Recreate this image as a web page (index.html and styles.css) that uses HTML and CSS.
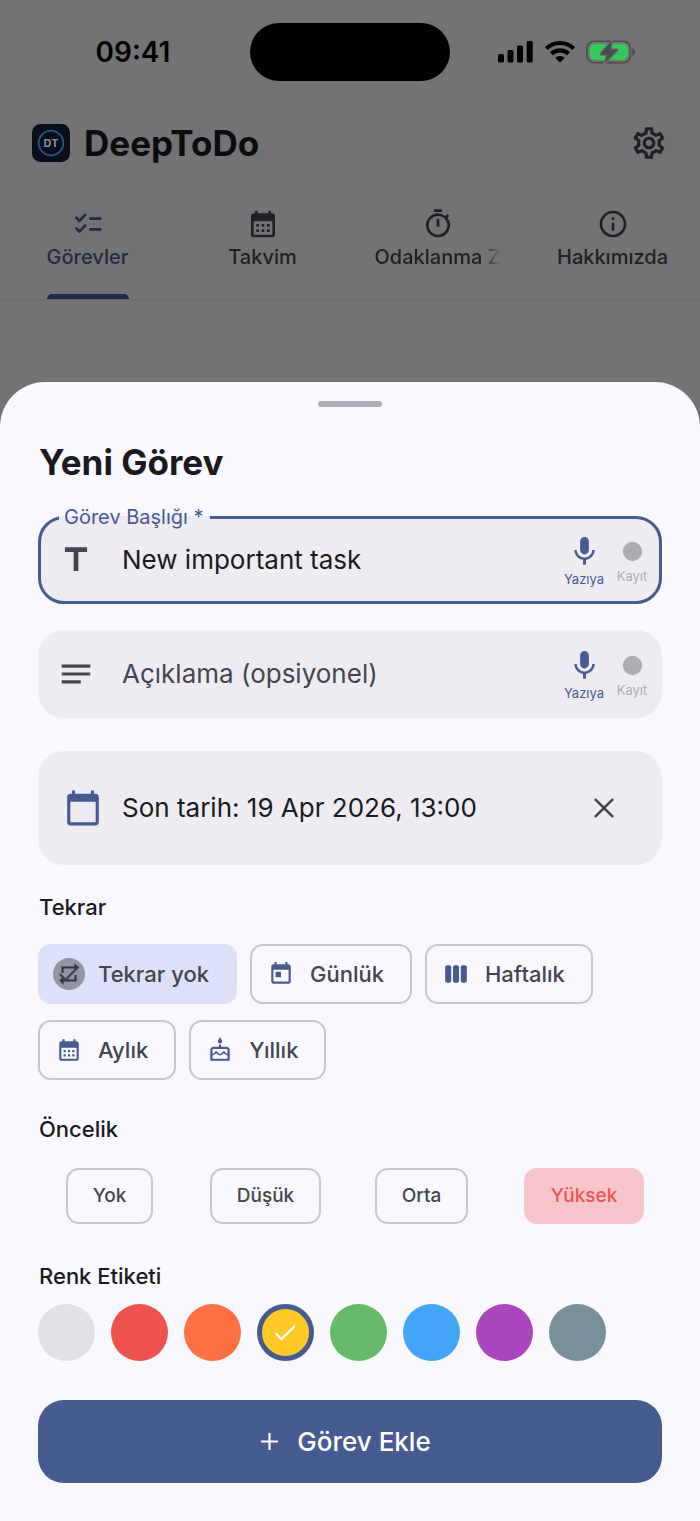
FILE: index.html
```html
<!DOCTYPE html>
<html lang="tr">
<head>
<meta charset="utf-8">
<meta name="viewport" content="width=device-width, initial-scale=1">
<title>DeepToDo</title>
<link rel="stylesheet" href="styles.css">
</head>
<body>
<svg class="sprite" aria-hidden="true">
  <symbol id="mic" viewBox="0 0 24 24"><path d="M12 14c1.66 0 2.99-1.34 2.99-3L15 5c0-1.66-1.34-3-3-3S9 3.340 9 5v6c0 1.660 1.340 3 3 3zm5.300-3c0 3-2.540 5.100-5.300 5.100S6.700 14 6.700 11H5c0 3.410 2.720 6.230 6 6.720V21h2v-3.280c3.280-.48 6-3.300 6-6.720h-1.700z"/></symbol>
  <symbol id="record" viewBox="0 0 24 24"><circle cx="12" cy="12" r="8"/></symbol>
  <symbol id="month" viewBox="0 0 24 24"><path d="M19 4h-1V2h-2v2H8V2H6v2H5c-1.11 0-1.99.9-1.99 2L3 20c0 1.100.89 2 2 2h14c1.100 0 2-.9 2-2V6c0-1.100-.9-2-2-2zm0 16H5V10h14v10zM9 14H7v-2h2v2zm4 0h-2v-2h2v2zm4 0h-2v-2h2v2zm-8 4H7v-2h2v2zm4 0h-2v-2h2v2zm4 0h-2v-2h2v2z"/></symbol>
</svg>

<div class="app">
  <div class="status">
    <time class="status-time">09:41</time>
    <span class="island"></span>
    <div class="status-icons">
      <svg width="36" height="24" viewBox="0 0 36 24"><g fill="#000"><rect x="0" y="14" width="6" height="8.500" rx="1.600"/><rect x="9.500" y="10" width="6" height="12.500" rx="1.600"/><rect x="19" y="5.500" width="6" height="17" rx="1.600"/><rect x="28.700" y="1" width="6" height="21.500" rx="1.600"/></g></svg>
      <svg width="32" height="24" viewBox="0 0 32 24"><g fill="none" stroke="#000" stroke-width="4.200"><path d="M2.300 8.600a19.500 19.500 0 0 1 27.400 0"/><path d="M7.400 13.800a12.300 12.300 0 0 1 17.200 0"/></g><path d="M16 22.600l-4.800-4.700a6.800 6.800 0 0 1 9.600 0z"/></svg>
      <svg width="50" height="24" viewBox="0 0 50 24"><rect x="1" y="1.200" width="43.500" height="21.400" rx="7.200" fill="none" stroke="#4c4c4e" stroke-width="1.600"/><path d="M46.400 8v8c1.600-.6 2.600-2.200 2.600-4s-1-3.400-2.600-4z" fill="#4c4c4e"/><rect x="3.600" y="3.800" width="38.400" height="16.200" rx="5" fill="#34c759"/><path d="M26 .4L14.800 13.200c-.6.800-.2 1.500.6 1.500h5.400L18.400 23.600 31 10.700c.7-.8.300-1.500-.6-1.500h-5.600z" fill="#4c4c4e" stroke="#737375" stroke-width="2" paint-order="stroke"/></svg>
    </div>
  </div>

  <header class="bar">
    <svg class="logo" viewBox="0 0 38 38"><rect width="38" height="38" rx="8.500" fill="#0a0d1c"/><circle cx="19" cy="19" r="12.300" fill="none" stroke="#1e5a88" stroke-width="1.800"/><text x="19" y="22.600" text-anchor="middle">DT</text></svg>
    <h1>DeepToDo</h1>
    <button class="plain" type="button" aria-label="Ayarlar"><svg class="i38" viewBox="0 0 24 24"><path d="M19.430 12.980c.04-.32.07-.64.07-.98 0-.34-.03-.66-.07-.98l2.110-1.650c.19-.15.24-.42.12-.64l-2-3.460c-.09-.16-.26-.25-.44-.25-.06 0-.12.01-.17.03l-2.490 1c-.52-.4-1.080-.73-1.690-.98l-.38-2.650C14.460 2.180 14.250 2 14 2h-4c-.25 0-.46.18-.49.42l-.38 2.650c-.61.25-1.170.59-1.690.98l-2.490-1c-.06-.02-.12-.03-.18-.03-.17 0-.34.09-.43.25l-2 3.460c-.13.22-.07.49.12.64l2.110 1.650c-.04.32-.07.65-.07.98 0 .33.03.66.07.98l-2.110 1.650c-.19.15-.24.42-.12.64l2 3.460c.09.16.26.25.44.25.06 0 .12-.01.17-.03l2.490-1c.52.4 1.080.73 1.690.98l.38 2.650c.03.24.24.42.49.42h4c.25 0 .46-.18.49-.42l.38-2.650c.61-.25 1.170-.59 1.690-.98l2.490 1c.06.02.12.03.18.03.17 0 .34-.09.43-.25l2-3.460c.12-.22.07-.49-.12-.64l-2.110-1.650zm-1.980-1.710c.04.31.05.52.05.73 0 .21-.02.43-.05.73l-.14 1.130.89.7 1.080.84-.7 1.210-1.270-.51-1.040-.42-.9.68c-.43.32-.84.56-1.250.73l-1.060.43-.16 1.130-.2 1.350h-1.400l-.19-1.350-.16-1.130-1.060-.43c-.43-.18-.83-.41-1.230-.71l-.91-.7-1.060.43-1.270.51-.7-1.210 1.080-.84.89-.7-.14-1.130c-.03-.31-.05-.54-.05-.74s.02-.43.05-.73l.14-1.130-.89-.7-1.080-.84.7-1.210 1.270.51 1.040.42.9-.68c.43-.32.84-.56 1.250-.73l1.060-.43.16-1.130.2-1.350h1.390l.19 1.350.16 1.130 1.060.43c.43.18.83.41 1.230.71l.91.7 1.060-.43 1.270-.51.7 1.210-1.070.85-.89.7.14 1.130zM12 8c-2.210 0-4 1.790-4 4s1.790 4 4 4 4-1.790 4-4-1.790-4-4-4zm0 6c-1.100 0-2-.9-2-2s.9-2 2-2 2 .9 2 2-.9 2-2 2z"/></svg></button>
  </header>

  <nav class="tabs">
    <a class="tab active" href="#gorevler" aria-current="page"><svg class="i32" viewBox="0 0 24 24"><path d="M22 7h-9v2h9V7zm0 8h-9v2h9v-2zM5.540 11 2 7.460l1.410-1.410 2.120 2.120 4.240-4.240 1.410 1.410L5.540 11zm0 8L2 15.460l1.410-1.410 2.120 2.120 4.240-4.240 1.410 1.410L5.540 19z"/></svg><span>Görevler</span></a>
    <a class="tab" href="#takvim"><svg class="i32"><use href="#month"/></svg><span>Takvim</span></a>
    <a class="tab" href="#odaklanma"><svg class="i32" viewBox="0 0 24 24"><path d="M15 1H9v2h6V1zm-4 13h2V8h-2v6zm8.030-6.610 1.420-1.420c-.43-.51-.9-.99-1.410-1.410l-1.420 1.420A8.962 8.962 0 0 0 12 4c-4.970 0-9 4.030-9 9s4.020 9 9 9a8.994 8.994 0 0 0 7.030-14.610zM12 20c-3.870 0-7-3.130-7-7s3.130-7 7-7 7 3.130 7 7-3.130 7-7 7z"/></svg><span class="fade">Odaklanma Z</span></a>
    <a class="tab" href="#hakkimizda"><svg class="i32" viewBox="0 0 24 24"><path d="M11 7h2v2h-2zm0 4h2v6h-2zm1-9C6.480 2 2 6.480 2 12s4.480 10 10 10 10-4.480 10-10S17.520 2 12 2zm0 18c-4.410 0-8-3.590-8-8s3.590-8 8-8 8 3.590 8 8-3.590 8-8 8z"/></svg><span>Hakkımızda</span></a>
  </nav>
</div>

<main class="sheet">
  <div class="handle"></div>
  <form>
    <h2>Yeni Görev</h2>

    <fieldset class="field focused">
      <legend><label for="task-title">Görev Başlığı *</label></legend>
      <div class="field-row">
        <svg class="i38" viewBox="0 0 24 24"><path d="M5 4v3h5.500v12h3V7H19V4z"/></svg>
        <input id="task-title" type="text" value="New important task">
        <button class="voice" type="button"><svg class="i35"><use href="#mic"/></svg>Yazıya</button>
        <button class="voice off" type="button"><svg class="i29"><use href="#record"/></svg>Kayıt</button>
      </div>
    </fieldset>

    <div class="field">
      <div class="field-row">
        <svg class="i38" viewBox="0 0 24 24"><path d="M3 18h12v-2H3v2zM3 6v2h18V6H3zm0 7h18v-2H3v2z"/></svg>
        <input type="text" placeholder="Açıklama (opsiyonel)" aria-label="Açıklama">
        <button class="voice" type="button"><svg class="i35"><use href="#mic"/></svg>Yazıya</button>
        <button class="voice off" type="button"><svg class="i29"><use href="#record"/></svg>Kayıt</button>
      </div>
    </div>

    <div class="date">
      <svg class="i38" viewBox="0 0 24 24"><path d="M20 3h-1V1h-2v2H7V1H5v2H4c-1.100 0-2 .9-2 2v16c0 1.100.9 2 2 2h16c1.100 0 2-.9 2-2V5c0-1.100-.9-2-2-2zm0 18H4V8h16v13z"/></svg>
      <span>Son tarih: 19 Apr 2026, 13:00</span>
      <button class="plain" type="button" aria-label="Tarihi temizle"><svg class="i32" viewBox="0 0 24 24"><path d="M5.700 5.700l12.600 12.600M18.300 5.700L5.700 18.300" fill="none" stroke="currentColor" stroke-width="1.900" stroke-linecap="round"/></svg></button>
    </div>

    <h3>Tekrar</h3>
    <div class="chips" role="radiogroup" aria-label="Tekrar">
      <label class="chip selected"><input type="radio" name="repeat" checked><span class="avatar"><svg class="i26" viewBox="0 0 24 24"><path fill="#2f3445" d="M7 7h10v3l4-4-4-4v3H5v6h2V7zm10 10H7v-3l-4 4 4 4v-3h12v-6h-2v4z"/><path d="M3.600 12.200l5.200 5.100L20.800 5.200" fill="none" stroke="#3c4357" stroke-width="2.200"/></svg></span>Tekrar yok</label>
      <label class="chip"><input type="radio" name="repeat"><svg class="i26" viewBox="0 0 24 24"><path d="M19 3h-1V1h-2v2H8V1H6v2H5c-1.110 0-1.990.9-1.990 2L3 19c0 1.100.89 2 2 2h14c1.100 0 2-.9 2-2V5c0-1.100-.9-2-2-2zm0 16H5V8h14v11zM7 10h5v5H7z"/></svg>Günlük</label>
      <label class="chip"><input type="radio" name="repeat"><svg class="i26" viewBox="0 0 24 24"><rect x="2" y="4" width="5.600" height="16" rx="1.800"/><rect x="9.200" y="4" width="5.600" height="16" rx="1.800"/><rect x="16.400" y="4" width="5.600" height="16" rx="1.800"/></svg>Haftalık</label>
      <label class="chip"><input type="radio" name="repeat"><svg class="i26"><use href="#month"/></svg>Aylık</label>
      <label class="chip"><input type="radio" name="repeat"><svg class="i26" viewBox="0 0 24 24"><path d="M12 6c1.110 0 2-.9 2-2 0-.38-.1-.73-.29-1.030L12 0l-1.710 2.970c-.19.3-.29.65-.29 1.030 0 1.100.9 2 2 2zm6 3h-5V7h-2v2H6c-1.660 0-3 1.340-3 3v9c0 .55.45 1 1 1h16c.55 0 1-.45 1-1v-9c0-1.660-1.340-3-3-3zm1 11H5v-3c.9-.01 1.760-.37 2.400-1.010l1.090-1.070 1.070 1.070c1.310 1.310 3.590 1.300 4.890 0l1.080-1.070 1.070 1.070c.64.64 1.500 1 2.400 1.010v3zm0-4.500c-.51-.01-.99-.2-1.350-.57l-2.130-2.130-2.140 2.130c-.74.74-2.030.74-2.770 0L8.480 12.800l-2.140 2.130c-.35.36-.83.56-1.340.57V12c0-.55.45-1 1-1h12c.55 0 1 .45 1 1v3.500z"/></svg>Yıllık</label>
    </div>

    <h3>Öncelik</h3>
    <div class="levels" role="radiogroup" aria-label="Öncelik">
      <label class="level"><input type="radio" name="priority"><span>Yok</span></label>
      <label class="level"><input type="radio" name="priority"><span>Düşük</span></label>
      <label class="level"><input type="radio" name="priority"><span>Orta</span></label>
      <label class="level high"><input type="radio" name="priority" checked><span>Yüksek</span></label>
    </div>

    <h3>Renk Etiketi</h3>
    <div class="colors" role="radiogroup" aria-label="Renk Etiketi">
      <label class="color none"><input type="radio" name="color" aria-label="Yok"></label>
      <label class="color red"><input type="radio" name="color" aria-label="Kırmızı"></label>
      <label class="color orange"><input type="radio" name="color" aria-label="Turuncu"></label>
      <label class="color yellow"><input type="radio" name="color" aria-label="Sarı" checked><svg class="i29" viewBox="0 0 24 24"><path d="M4 12.900l4.600 4.600L19.800 6.600" fill="none" stroke="#fff" stroke-width="1.800"/></svg></label>
      <label class="color green"><input type="radio" name="color" aria-label="Yeşil"></label>
      <label class="color blue"><input type="radio" name="color" aria-label="Mavi"></label>
      <label class="color purple"><input type="radio" name="color" aria-label="Mor"></label>
      <label class="color slate"><input type="radio" name="color" aria-label="Gri"></label>
    </div>

    <button class="submit" type="submit"><svg class="i29" viewBox="0 0 24 24"><path d="M12 5v14M5 12h14" fill="none" stroke="#fff" stroke-width="1.800"/></svg>Görev Ekle</button>
  </form>
</main>
</body>
</html>
```

FILE: styles.css
```css
* {
  box-sizing: border-box;
}

body {
  margin: 0;
  min-height: 100vh;
  display: flex;
  flex-direction: column;
  background: #737375;
  color: #1a1b21;
  font-family: Inter, Roboto, sans-serif;
}

svg {
  display: block;
  flex: none;
  fill: currentColor;
}

.sprite {
  position: absolute;
  width: 0;
  height: 0;
}

.i26 { width: 26px; height: 26px; }
.i29 { width: 29px; height: 29px; }
.i32 { width: 32px; height: 32px; }
.i35 { width: 35px; height: 35px; }
.i38 { width: 38px; height: 38px; }

button {
  font-family: inherit;
  border: 0;
  cursor: pointer;
}

.plain {
  padding: 0;
  background: none;
  color: inherit;
}

/* Dimmed application behind the sheet */
.app {
  padding-bottom: 82px;
}

.status {
  display: grid;
  grid-template-columns: 1fr 200px 1fr;
  align-items: center;
  padding-top: 23px;
}

.status-time {
  padding-left: 16px;
  text-align: center;
  font-size: 28px;
  font-weight: 600;
  line-height: 34px;
  color: #000;
}

.island {
  height: 58px;
  border-radius: 29px;
  background: #000;
}

.status-icons {
  display: flex;
  justify-content: center;
  gap: 10px;
  padding-right: 17px;
  color: #000;
}

.bar {
  display: flex;
  align-items: center;
  gap: 14px;
  padding: 40px 32px 0;
  color: #0c0c0f;
}

.bar .plain {
  margin-left: auto;
  color: #1f2024;
}

.logo {
  width: 38px;
  height: 38px;
}

.logo text {
  fill: #8a8d93;
  font-size: 11px;
  font-weight: 700;
}

h1,
h2 {
  margin: 0;
  font-size: 35px;
  font-weight: 700;
  line-height: 44px;
}

.tabs {
  display: grid;
  grid-template-columns: repeat(4, 1fr);
  margin-top: 43px;
  border-bottom: 1px solid #69696c;
}

.tab {
  display: flex;
  flex-direction: column;
  align-items: center;
  gap: 5px;
  color: #1f2024;
  font-size: 20px;
  font-weight: 500;
  line-height: 24px;
  text-decoration: none;
  white-space: nowrap;
}

.tab::after {
  content: "";
  width: 82px;
  height: 5px;
  margin-top: 20px;
  border-radius: 5px 5px 0 0;
}

.tab.active {
  color: #202a44;
}

.tab.active::after {
  background: #202a44;
}

.fade {
  -webkit-mask-image: linear-gradient(to right, #000 85%, transparent);
  mask-image: linear-gradient(to right, #000 85%, transparent);
}

/* Bottom sheet */
.sheet {
  flex: 1;
  padding: 19px 38px 38px;
  border-radius: 45px 45px 0 0;
  background: #faf8ff;
}

.handle {
  width: 64px;
  height: 6px;
  margin: 0 auto 33px;
  border-radius: 3px;
  background: #afafb7;
}

h2,
h3 {
  padding-left: 1px;
}

.field {
  margin: 0 0 33px;
  border: 3px solid #eeecf2;
  border-radius: 26px;
  padding: 0 3px 0 16px;
  background: #eeecf2;
}

.field.focused {
  margin: 22px 0 26px;
  border-color: #465b91;
}

legend {
  margin-left: 2px;
  padding: 0 6px 0 5px;
  color: #465b91;
  font-size: 20px;
  line-height: 23px;
}

.focused .field-row {
  margin-top: -10px;
}

.field-row {
  display: flex;
  align-items: center;
  min-height: 82px;
  color: #44464f;
}

.field input {
  flex: 1;
  min-width: 0;
  margin-left: 27px;
  border: 0;
  padding: 0;
  outline: 0;
  background: none;
  color: #1a1b21;
  font-family: inherit;
  font-size: 26px;
  line-height: 32px;
}

.field input::placeholder {
  color: #44464f;
  opacity: 1;
}

.voice {
  display: flex;
  flex-direction: column;
  align-items: center;
  gap: 2px;
  min-width: 48px;
  padding: 0;
  background: none;
  color: #465b91;
  font-size: 13px;
  line-height: 16px;
}

.voice.off {
  color: #aeadb3;
}

.date {
  display: flex;
  align-items: center;
  gap: 20px;
  min-height: 114px;
  padding: 0 42px 0 26px;
  border-radius: 26px;
  background: #eeecf2;
  font-size: 26px;
  line-height: 32px;
}

.date > svg {
  color: #465b91;
}

.date .plain {
  margin-left: auto;
  color: #44464f;
}

h3 {
  margin: 0;
  font-size: 22px;
  font-weight: 500;
  line-height: 28px;
}

.date + h3 {
  margin-top: 28px;
}

.chip input,
.level input,
.color input {
  position: absolute;
  opacity: 0;
  width: 1px;
  height: 1px;
  margin: 0;
}

.chips {
  display: flex;
  flex-wrap: wrap;
  gap: 16px 13px;
  margin: 23px 0 35px;
}

.chip {
  display: flex;
  align-items: center;
  gap: 16px;
  min-height: 60px;
  padding: 0 26px 0 16px;
  border: 2px solid #c8c7d0;
  border-radius: 13px;
  color: #44464f;
  font-size: 22px;
  font-weight: 500;
}

.chip > svg {
  color: #465b91;
}

.chip.selected {
  gap: 13px;
  padding-left: 13px;
  border-color: #dce1f9;
  background: #dce1f9;
}

.avatar {
  display: grid;
  place-items: center;
  width: 32px;
  height: 32px;
  border-radius: 50%;
  background: #9295a3;
}

.levels {
  display: grid;
  grid-template-columns: repeat(4, 1fr);
  margin: 25px 0 38px;
}

.level {
  display: flex;
  justify-content: center;
  padding-right: 13px;
  color: #44464f;
  font-size: 19px;
  font-weight: 500;
  line-height: 24px;
}

.level:last-child {
  padding-right: 0;
}

.level span {
  padding: 14px 25px;
  border: 2px solid #c8c7d0;
  border-radius: 13px;
}

.level.high {
  color: #ef5350;
}

.level.high span {
  border-color: #f7c6cb;
  background: #f7c6cb;
}

.colors {
  display: flex;
  flex-wrap: wrap;
  gap: 16px;
  margin: 14px 0 39px;
}

.color {
  display: grid;
  place-items: center;
  width: 57px;
  height: 57px;
  border-radius: 50%;
}

.none { background: #e1e2e7; }
.red { background: #ef5350; }
.orange { background: #ff7043; }
.yellow { background: #ffca28; border: 5px solid #465b91; }
.green { background: #66bb6a; }
.blue { background: #42a5f5; }
.purple { background: #ab47bc; }
.slate { background: #78909c; }

.submit {
  display: flex;
  align-items: center;
  justify-content: center;
  gap: 13px;
  width: 100%;
  min-height: 83px;
  padding: 0 14px 0 0;
  border-radius: 26px;
  background: #465b91;
  color: #fff;
  font-size: 26px;
  font-weight: 500;
}
```
